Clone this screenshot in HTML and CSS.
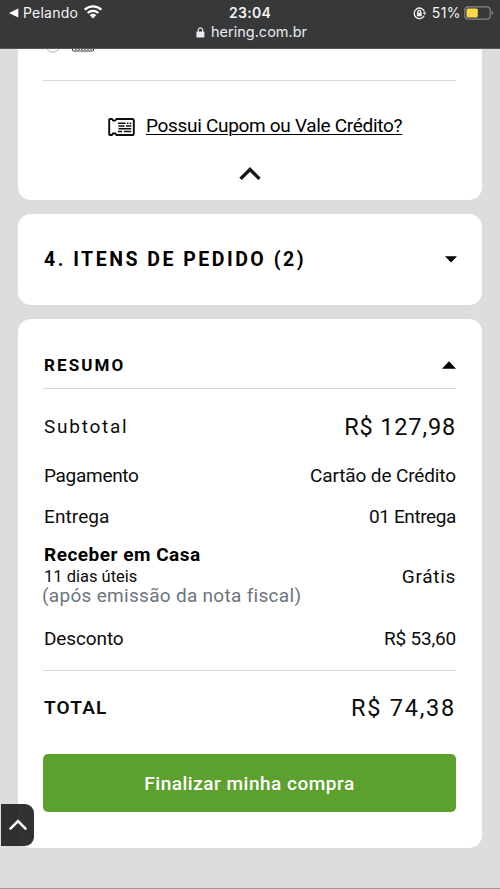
FILE: index.html
```html
<!DOCTYPE html>
<html lang="pt-BR">
<head>
<meta charset="utf-8">
<title>Hering - Resumo</title>
<link rel="stylesheet" href="styles.css">
</head>
<body>
<header class="browser">
  <div class="status">
    <div class="status-left">
      <svg width="10" height="10" viewBox="0 0 10 10"><path d="M0 5 9.3.4v9.2z" fill="#fff"/></svg>
      <span class="back">Pelando</span>
      <svg class="wifi" width="18" height="14" viewBox="0 0 18 14"><g fill="none" stroke="#fff" stroke-width="2.3"><path d="M.8 4.700a11.700 11.700 0 0 1 16.400 0"/><path d="M3.700 8a7.600 7.600 0 0 1 10.600 0"/></g><path d="M9 13.400 5.800 10.200a4.500 4.500 0 0 1 6.400 0z" fill="#fff"/></svg>
    </div>
    <span class="clock">23:04</span>
    <div class="status-right">
      <svg width="14" height="13" viewBox="0 0 14 13"><g fill="none" stroke="#f4f4f4" stroke-width="1.300"><path d="M11.200 8.800a5.300 5.300 0 1 1 .3-4.200"/><path d="M4.900 6V4.700a1.400 1.400 0 0 1 2.800 0V6"/></g><path d="M3.900 5.700h4.800v3.500H3.900zM9.700 5.400h3.700l-1.800 2.700z" fill="#f4f4f4"/></svg>
      <span class="percent">51%</span>
      <svg width="30" height="14" viewBox="0 0 30 14"><rect x=".8" y=".8" width="25.400" height="12.400" rx="3.400" fill="none" stroke="#858688" stroke-width="1.200"/><rect x="2.500" y="2.500" width="11.300" height="9" rx="1.500" fill="#f8d84a"/><path d="M27.700 4.800c2 .7 2 3.700 0 4.400z" fill="#858688"/></svg>
    </div>
  </div>
  <div class="address">
    <svg width="9" height="11" viewBox="0 0 9 11"><path d="M2.200 5V3.200a2.200 2.200 0 0 1 4.500 0V5" fill="none" stroke="#e9e9ee" stroke-width="1.200"/><rect x=".4" y="4.400" width="8" height="6.200" rx="1" fill="#e9e9ee"/></svg>
    <span>hering.com.br</span>
  </div>
</header>
<main>
  <section class="card payment">
    <div class="option">
      <svg width="60" height="5" viewBox="0 0 60 5"><circle cx="10" cy="-4" r="7.200" fill="none" stroke="#b5b5b5"/><path d="M29.500-2V1.500q0 .5 1 .5h19q1 0 1-.5V-2" fill="none" stroke="#333"/><path d="M32 .4h17" stroke="#777" stroke-width="1" stroke-dasharray="2 1"/></svg>
    </div>
    <div class="coupon">
      <svg class="ticket" width="28" height="20" viewBox="0 0 28 20"><path d="M2 2h2c.8 2.300 3.600 2.300 4.400 0H24.200q1.600 0 1.600 1.600v12.800q0 1.600-1.600 1.600H8.400c-.8-2.300-3.600-2.300-4.400 0H2q-.8 0-.8-.8V2.800Q1.200 2 2 2z" fill="none" stroke="#0c0c0c" stroke-width="1.900" stroke-linejoin="round"/><path d="M10 6.200h7.500M19 6.200h1.500M21.700 6.200h1.500M10.500 9h6M18 9h5.200M10.500 11.700h12.700M10 14.400h4M16 14.400h7.200" stroke="#0c0c0c" stroke-width="1.500"/></svg>
      <a class="coupon-link">Possui Cupom ou Vale Crédito?</a>
    </div>
    <svg class="collapse" width="24" height="16" viewBox="0 0 24 16"><path d="M2.500 12.900 12 3.500l9.500 9.400" fill="none" stroke="#16181a" stroke-width="3.400"/></svg>
  </section>
  <section class="card items">
    <h2>4. ITENS DE PEDIDO (2)</h2>
    <svg width="12" height="7" viewBox="0 0 12 7"><path d="M0 .3h12L6 6.500z"/></svg>
  </section>
  <section class="card summary">
    <div class="row heading">
      <h3>RESUMO</h3>
      <svg width="14" height="8" viewBox="0 0 14 8"><path d="M0 7.700h14L7 .3z"/></svg>
    </div>
    <div class="row subtotal"><span class="wide">Subtotal</span><span class="amount">R$ 127,98</span></div>
    <div class="row"><span class="tight">Pagamento</span><span class="method">Cartão de Crédito</span></div>
    <div class="row"><span class="entrega">Entrega</span><span class="count">01 Entrega</span></div>
    <div class="row shipping">
      <div class="delivery">
        <strong>Receber em Casa</strong>
        <span class="days">11 dias úteis</span>
        <span class="note">(após emissão da nota fiscal)</span>
      </div>
      <span class="free">Grátis</span>
    </div>
    <div class="row discount"><span class="method">Desconto</span><span class="value">R$ 53,60</span></div>
    <div class="row total"><span class="total-label">TOTAL</span><span class="amount total-amount">R$ 74,38</span></div>
    <button class="buy">Finalizar minha compra</button>
  </section>
</main>
<div class="to-top"><svg width="20" height="14" viewBox="0 0 20 14"><path d="M2.500 10.700 10 3.200l7.500 7.500" fill="none" stroke="#fff" stroke-width="2.600" stroke-linecap="round"/></svg></div>
</body>
</html>
```
FILE: styles.css
```css
* { box-sizing: border-box; }
body {
  margin: 0;
  height: 889px;
  overflow: hidden;
  position: relative;
  background: #ddd;
  border-bottom: 1px solid #999;
  color: #0c0c0c;
  font: 19px/20px Roboto, sans-serif;
}
svg { display: block; flex: none; }
h2, h3 { margin: 0; color: #000; }

.browser {
  height: 49px;
  padding-top: 3px;
  background: #37383a;
  border-bottom: 1px solid #59595a;
  color: #f4f4f4;
  font: 14px/20px Inter, sans-serif;
}
.status {
  display: grid;
  grid-template-columns: 1fr auto 1fr;
  align-items: center;
  height: 20px;
  padding: 0 6px 0 9px;
}
.status-left, .status-right { display: flex; align-items: center; }
.back { margin-left: 4px; letter-spacing: .23px; }
.wifi { margin-left: 6px; margin-top: -2px; }
.clock { font-weight: 600; letter-spacing: .29px; margin-left: -3px; }
.status-right { justify-content: flex-end; }
.percent { margin: 0 3px 0 5px; letter-spacing: .4px; }
.address {
  display: flex;
  align-items: center;
  height: 18px;
  padding-left: 196px;
  gap: 6px;
  font-size: 14.5px;
  color: #e9e9ee;
}

.card { margin: 0 18px; background: #fff; border-radius: 13px; }
.payment { height: 151px; border-radius: 0 0 13px 13px; padding: 0 26px 0 25px; }
.option { height: 32px; border-bottom: 1px solid #d9d9d9; }
.coupon { display: flex; align-items: center; height: 20px; margin: 35px 0 0 65px; }
.ticket { margin-top: 2px; }
.coupon-link {
  margin-left: 10px;
  letter-spacing: -.31px;
  white-space: nowrap;
  text-decoration: underline;
  text-decoration-thickness: 1px;
  text-underline-offset: 2px;
  color: #000;
}
.collapse { margin: 30px auto 0; }
.items {
  height: 91px;
  margin-top: 14px;
  padding: 0 25px 0 26px;
  display: flex;
  align-items: center;
  justify-content: space-between;
}
h2 { font-size: 19.5px; letter-spacing: 2.5px; padding-top: 1px; }
.summary { height: 529px; margin-top: 14px; padding: 23px 26px 0 25px; }
.row { display: flex; justify-content: space-between; align-items: center; height: 41px; padding-left: 1px; }
.heading { height: 47px; border-bottom: 1px solid #d8d8d8; }
h3 { font-size: 17px; letter-spacing: 2.1px; }
.subtotal { height: 66px; padding-top: 9px; }
.wide { letter-spacing: 1.75px; }
.amount { font-size: 23.5px; letter-spacing: .85px; }
.total-amount { letter-spacing: 1.75px; }
.tight { letter-spacing: -.3px; }
.method { letter-spacing: -.12px; }
.entrega { letter-spacing: .1px; }
.count { letter-spacing: -.4px; }
.shipping { height: 80px; }
.delivery { display: flex; flex-direction: column; margin-top: -5px; }
strong { margin-bottom: 3px; color: #000; letter-spacing: .5px; }
.days { font-size: 16.5px; line-height: 18px; }
.note { line-height: 19px; margin-left: -2px; letter-spacing: .3px; color: #6c757d; }
.free { letter-spacing: .7px; }
.value { letter-spacing: -.2px; }
.discount { height: 54px; padding-bottom: 9px; border-bottom: 1px solid #d9d9d9; }
.total { height: 74px; }
.total-label { font-weight: 600; letter-spacing: 1.15px; }
.buy {
  display: block;
  width: 413px;
  height: 58px;
  margin-top: 9px;
  padding: 1px 0 0;
  border: 0;
  border-radius: 5px;
  background: #5ca02e;
  color: #fff;
  font: 500 19px/20px Roboto, sans-serif;
  letter-spacing: .51px;
}
.to-top {
  position: absolute;
  left: 1px;
  top: 804px;
  width: 33px;
  height: 42px;
  display: flex;
  align-items: center;
  justify-content: center;
  background: rgba(28, 28, 28, .9);
  border-radius: 0 9px 9px 0;
}
```
